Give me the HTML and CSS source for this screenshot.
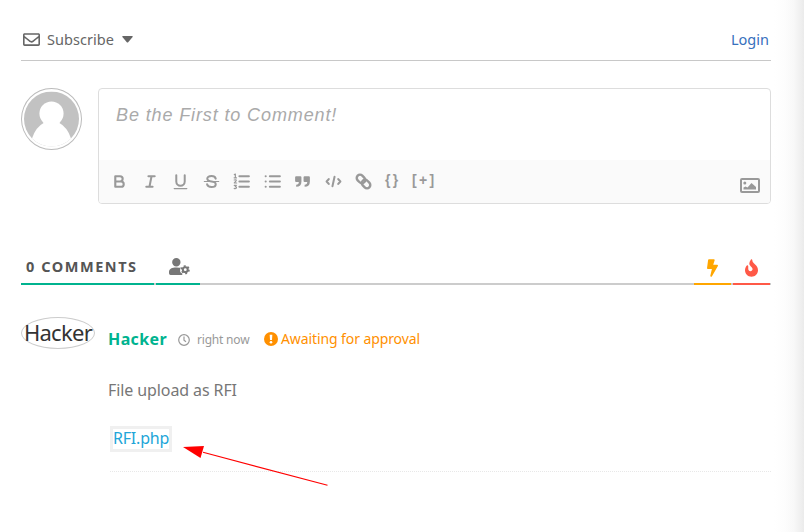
FILE: index.html
```
<!DOCTYPE html>
<html lang="en">
<head>
<meta charset="utf-8">
<title>Comments</title>
<link rel="stylesheet" href="styles.css">
</head>
<body>
<main class="thread">
  <header class="subscribe-bar">
    <div class="subscribe">
      <svg class="envelope" viewBox="0 0 512 512"><path fill="currentColor" d="M464 64H48C21.490 64 0 85.490 0 112v288c0 26.510 21.490 48 48 48h416c26.510 0 48-21.490 48-48V112c0-26.510-21.490-48-48-48zm0 48v40.805c-22.422 18.259-58.168 46.651-134.587 106.490-16.841 13.247-50.201 45.072-73.413 44.701-23.208.375-56.579-31.459-73.413-44.701C106.180 199.465 70.425 171.067 48 152.805V112h416zM48 400V214.398c22.914 18.251 55.409 43.862 104.938 82.646 21.857 17.205 60.134 55.186 103.062 54.955 42.717.231 80.509-37.199 103.053-54.947 49.528-38.783 82.032-64.401 104.947-82.653V400H48z"/></svg>
      <span class="subscribe-label">Subscribe</span>
      <svg class="caret" viewBox="0 0 11 7"><path fill="currentColor" d="M0.700 0H10.300Q11 .4 10.600 1L6.200 6.200Q5.500 6.900 4.800 6.200L.4 1Q0 .4.700 0Z"/></svg>
    </div>
    <a class="login">Login</a>
  </header>

  <section class="form">
    <div class="avatar">
      <svg viewBox="0 0 56 56"><defs><clipPath id="disc"><circle cx="28" cy="28" r="28"/></clipPath></defs><g clip-path="url(#disc)"><path fill="#c2c2c2" d="M0 0h56v56H0z"/><circle cx="28" cy="22.500" r="12.300" fill="#fff"/><path fill="#fff" d="M8 48Q12 36 20 32H36Q44 36 48 48V56H8Z"/></g></svg>
    </div>
    <div class="editor">
      <div class="placeholder"><span>Be the First to Comment!</span></div>
      <div class="toolbar">
        <div class="tools">
          <svg class="tool" viewBox="0 0 18 18"><path d="M5 4h4.500a2.500 2.500 0 0 1 0 5H5zM5 9h5.500a2.500 2.500 0 0 1 0 5H5z"/></svg>
          <svg class="tool" viewBox="0 0 18 18"><path class="mid" d="M7 4h6M5 14h6M8 14l2-10"/></svg>
          <svg class="tool" viewBox="0 0 18 18"><path class="mid" d="M5 3v6a4.012 4.012 0 0 0 4 4 4.012 4.012 0 0 0 4-4V3"/><path class="thin" d="M3 15.700h12"/></svg>
          <svg class="tool" viewBox="0 0 18 18"><path class="thin" d="M2.200 9h13.600"/><path class="mid" d="M13 6.300C12.500 4.400 11 3.900 9 3.900 6.300 3.900 5 5 5 6.500 5 8 6.500 8.700 9 9s4 1 4 2.500-1.300 2.700-4 2.700c-2.500 0-3.800-.8-4.200-2.500"/></svg>
          <svg class="tool" viewBox="0 0 18 18"><path class="mid" d="M7 4h9M7 9h9M7 14h9"/><path class="thin" d="M2.200 2.500l1-.5v3.500M2 5.500h2.300M2.100 7.600q2.200-.8 1.900.6L2.200 10.400h2.200M2.100 12.600h2L3 14q2 .2.900 1.500-.7.600-1.800.1"/></svg>
          <svg class="tool" viewBox="0 0 18 18"><path class="mid" d="M6.500 4H16M6.500 9H16M6.500 14H16M2.500 4h.1M2.500 9h.1M2.500 14h.1"/></svg>
          <svg class="tool" viewBox="0 0 18 18"><path class="solid" d="M3 4h4q1 0 1 1v4q0 5-5 5v-2q2.500 0 2.500-2.500H3q-1 0-1-1V5q0-1 1-1zM11 4h4q1 0 1 1v4q0 5-5 5v-2q2.500 0 2.500-2.500H11q-1 0-1-1V5q0-1 1-1z"/></svg>
          <svg class="tool" viewBox="0 0 18 18"><path d="M4.500 6.700 2.500 9l2 2.300M13.500 6.700 15.500 9l-2 2.300"/><path class="mid" d="M10 4.500l-2 9"/></svg>
          <svg class="tool" viewBox="0 0 18 18"><g class="link-rings" transform="rotate(45 9 9)"><rect x="1.200" y="5.900" width="8.800" height="6.200" rx="3.100"/><rect x="8" y="5.900" width="8.800" height="6.200" rx="3.100"/></g></svg>
          <span class="text-tool braces">{}</span>
          <span class="text-tool">[+]</span>
        </div>
        <svg class="image-icon" viewBox="0 0 20 15"><rect x="1" y="1" width="18" height="13" rx="1" fill="none" stroke="currentColor" stroke-width="2"/><circle cx="4.800" cy="5" r="1.500" fill="currentColor"/><path fill="currentColor" d="M3.500 11.500V9.500L5.500 8.500 7.500 9.500 11.500 5 16 9V11.500z"/></svg>
      </div>
    </div>
  </section>

  <nav class="tabs">
    <div class="tab count"><span>0 COMMENTS</span></div>
    <div class="tab users"><svg viewBox="0 0 640 512"><path fill="currentColor" d="M224 256a128 128 0 1 0 0-256 128 128 0 0 0 0 256zM314 292q-18-4-90-4C90 288 0 330 0 430v34q0 48 48 48h365q-20-15-15-45-65-33-65-85l14-17-14-28 38-47z"/><g fill="none" stroke="currentColor"><circle cx="496" cy="352" r="74" stroke-width="62"/><circle cx="496" cy="352" r="112" stroke-width="50" stroke-dasharray="58.600 58.600"/></g></svg></div>
    <div class="tab-space"></div>
    <div class="tab bolt"><svg viewBox="0 0 320 512"><path fill="currentColor" d="M296 160H180.600l42.600-129.800C227.200 15 215.700 0 200 0H56C44 0 33.800 8.900 32.200 20.800l-32 240C-1.700 275.200 9.500 288 24 288h118.700L96.600 482.500c-3.600 15.200 8 29.500 23.300 29.500 8.400 0 16.400-4.400 20.800-12l176-304c9.300-15.900-2.200-36-20.700-36z"/></svg></div>
    <div class="tab fire"><svg viewBox="0 0 384 512"><path fill="currentColor" d="M216 23.860c0-23.800-30.650-32.770-44.150-13.040C48 191.850 224 200 224 288c0 35.630-29.110 64.460-64.850 63.990-35.170-.45-63.150-29.770-63.150-64.940v-85.510c0-21.700-26.470-32.230-41.430-16.500C27.800 213.160 0 261.330 0 320c0 105.870 86.130 192 192 192s192-86.130 192-192c0-170.290-168-193-168-296.140z"/></svg></div>
  </nav>

  <article class="comment">
    <div class="user-avatar"><span>Hacker</span></div>
    <div class="content">
      <div class="meta">
        <span class="name">Hacker</span>
        <svg class="clock" viewBox="0 0 12 12"><g fill="none" stroke="currentColor" stroke-width="1.200"><circle cx="6" cy="6" r="5.300"/><path d="M6 2.600v3.600l2 1.500"/></g></svg>
        <span class="time">right now</span>
        <svg class="alert" viewBox="0 0 14 14"><circle cx="7" cy="7" r="7" fill="currentColor"/><path fill="#fff" d="M5.700 2.800h2.600L8 8H6z"/><circle cx="7" cy="10.200" r="1.300" fill="#fff"/></svg>
        <span class="status">Awaiting for approval</span>
      </div>
      <p class="message"><span>File upload as RFI</span></p>
      <a class="file"><span>RFI.php</span></a>
      <div class="divider"></div>
    </div>
  </article>
</main>
<svg class="pointer" viewBox="0 0 146 42"><path d="M20 6.300 144.500 39.300" stroke="red" stroke-width="1.100"/><path fill="red" d="M0 1 21 0 17.500 12z"/></svg>
</body>
</html>
```
FILE: styles.css
```
* { box-sizing: border-box; }
body {
  margin: 0;
  height: 532px;
  overflow: hidden;
  position: relative;
  font-family: "Noto Sans", "Open Sans", sans-serif;
  color: #555;
  background: linear-gradient(to right, #fff 774px, #fdfdfd 784px, #f8f8f8 794px, #ebebeb 804px);
}
svg { display: block; flex: none; }
span, a { white-space: nowrap; }
.thread { width: 750px; margin-left: 21px; padding-top: 20px; }

.subscribe-bar {
  height: 41px;
  display: flex;
  justify-content: space-between;
  border-bottom: 1px solid #c8c8c8;
  line-height: 38px;
  font-size: 14.5px;
}
.subscribe { display: flex; align-items: center; height: 38px; color: #666; }
.envelope { width: 17px; height: 17px; margin: 0 7px 0 2px; }
.subscribe-label { width: 67px; letter-spacing: .05px; }
.caret { width: 11px; height: 7px; margin-left: 8px; }
.login { color: #3770bd; padding-right: 2px; }

.form { display: flex; gap: 16px; margin-top: 27px; height: 116px; }
.avatar { width: 61px; height: 62px; border: 1px solid #bbb; border-radius: 50%; padding: 2px; flex: none; }
.avatar svg { width: 55px; height: 56px; }
.editor { width: 673px; border: 1px solid #ddd; border-radius: 4px; overflow: hidden; }
.placeholder {
  height: 71px;
  padding: 15px 0 0 17px;
  font: italic 18px/22px "Liberation Sans", Arial, sans-serif;
  letter-spacing: .88px;
  color: #aaa;
}
.toolbar { height: 43px; display: flex; justify-content: space-between; background: #fafafa; color: #999; }
.tools { display: flex; align-items: center; padding-left: 11px; gap: 11.550px; }
.tool { width: 19px; height: 19px; fill: none; stroke: #999; stroke-width: 2; stroke-linecap: round; stroke-linejoin: round; }
.mid { stroke-width: 1.900; }
.thin { stroke-width: 1.100; }
.solid { fill: #999; stroke: none; }
.link-rings { stroke-width: 2.300; }
.text-tool { font: bold 14px/20px "Liberation Sans", Arial, sans-serif; letter-spacing: 2.300px; margin-top: -4px; }
.image-icon { width: 20px; height: 15px; margin: 18px 10px 0 0; }

.tabs { display: flex; gap: 2px; height: 35px; margin-top: 46px; background: linear-gradient(#ccc, #ccc) bottom / 100% 2px no-repeat; padding-right: 1px; }
.tab { border-bottom: 2px solid #00b38f; display: flex; justify-content: center; }
.count { width: 133px; justify-content: flex-start; padding-left: 5px; font-size: 14.5px; line-height: 32px; font-weight: 700; letter-spacing: 1.550px; }
.users { width: 44px; color: #777; }
.users svg { width: 21px; height: 17px; margin: 8px 0 0 2px; }
.tab-space { flex: 1; }
.bolt { width: 37px; color: #ffa600; border-color: #ffa600; }
.bolt svg { width: 11px; height: 18px; margin-top: 9px; }
.fire { width: 37px; color: #ff5947; border-color: #ff5947; }
.fire svg { width: 13px; height: 18px; margin-top: 9px; }

.comment { display: flex; margin-top: 32px; }
.user-avatar { width: 74px; height: 32px; border: 1px solid #ccc; border-radius: 50%; display: flex; justify-content: center; font-size: 22px; line-height: 29px; letter-spacing: -.7px; color: #333; flex: none; }
.content { width: 676px; padding-left: 13px; flex: none; }
.meta { height: 44px; display: flex; align-items: center; }
.name { width: 59px; font-size: 16px; font-weight: 700; letter-spacing: .4px; color: #00b38f; }
.clock { width: 12px; height: 12px; margin: 2px 7px 0 11px; color: #999; }
.time { width: 53px; font-size: 12px; letter-spacing: -.2px; color: #999; }
.alert { width: 14px; height: 14px; margin: 0 3px 0 14px; color: #ff9000; }
.status { font-size: 14px; letter-spacing: -.1px; margin-top: -2px; color: #ff9000; }
.message { margin: 17px 0 24px; font-size: 16px; line-height: 24px; letter-spacing: -.1px; color: #777; }
.file { display: block; width: 62px; height: 26px; border: 3px solid #f0f0f0; margin-left: 2px; font-size: 16px; line-height: 19px; letter-spacing: -.2px; color: #21a5d8; }
.divider { margin: 19px 0 0 2px; border-top: 1px dotted #e8e8e8; }
.pointer { position: absolute; left: 183px; top: 446px; width: 146px; height: 42px; }
```
